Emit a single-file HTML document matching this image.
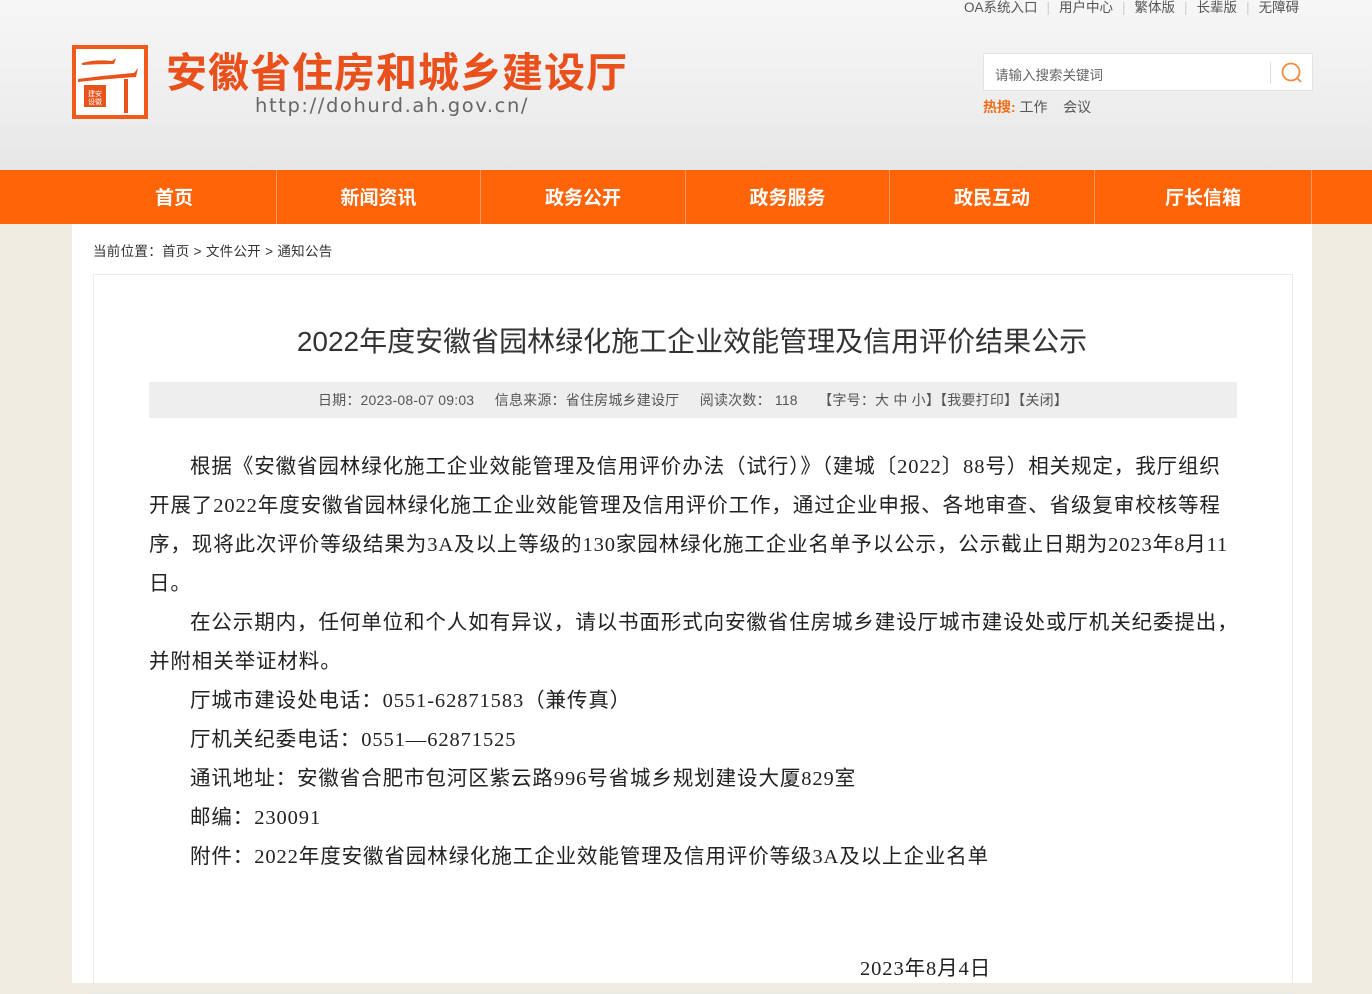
<!DOCTYPE html>
<html><head><meta charset="utf-8"><style>
*{margin:0;padding:0;box-sizing:border-box}
body{width:1372px;height:983px;overflow:hidden;background:#f0ebe1;font-family:"Liberation Sans","Noto Sans CJK SC",sans-serif;position:relative}
.hdr{position:absolute;left:0;top:0;width:1372px;height:170px;background:linear-gradient(#f6f6f6,#eeeeee 60%,#e6e6e6)}
.logo{position:absolute;left:72px;top:45px;width:76px;height:74px;border:4px solid #f05a1a;background:#fff}
.title{position:absolute;left:166px;top:41px;font-size:41px;font-weight:bold;color:#e9501c;letter-spacing:1px;font-family:"Noto Sans CJK SC",sans-serif;line-height:56px}
.url{position:absolute;left:255px;top:94px;font-size:19.5px;color:#666;letter-spacing:1.6px;font-family:"DejaVu Sans",sans-serif}
.top{position:absolute;left:964px;top:0;font-size:13.5px;color:#555;line-height:16px}
.top i{color:#ccc;font-style:normal;margin:0 9px}
.search{position:absolute;left:983px;top:53px;width:330px;height:38px;background:#fff;border:1px solid #e2e2e2}
.search span{position:absolute;left:11px;top:10px;font-size:13.5px;color:#666}
.search b{position:absolute;left:286px;top:8px;width:1px;height:22px;background:#ddd}
.hot{position:absolute;left:983px;top:97px;font-size:14px;color:#555}
.hot em{color:#f36b14;font-style:normal;font-weight:bold}
.nav{position:absolute;left:0;top:170px;width:1372px;height:54px;background:#ff6409}
.nav div{position:absolute;top:0;height:54px;line-height:54px;text-align:center;color:#fff;font-weight:bold;font-size:19px;border-right:1px solid #ff9a5e;font-family:"Noto Sans CJK SC",sans-serif}
.main{position:absolute;left:72px;top:224px;width:1240px;height:759px;background:#fff}
.crumb{position:absolute;left:21px;top:16px;font-size:13.5px;color:#333;letter-spacing:0.3px}
.box{position:absolute;left:21px;top:50px;width:1200px;height:720px;border:1px solid #eaeaea}
h1{position:absolute;left:0;width:1240px;top:96px;text-align:center;font-weight:normal;font-size:28px;color:#333;font-family:"Liberation Sans","Noto Sans CJK SC",sans-serif}
.meta{position:absolute;left:77px;top:158px;width:1088px;height:36px;background:#eeeeee;text-align:center;line-height:36px;font-size:14px;color:#555;letter-spacing:0.2px}
.body{position:absolute;left:77px;top:224px;width:1090px;font-size:20.5px;line-height:39px;color:#222;font-family:"Liberation Serif","Noto Sans CJK SC",serif;letter-spacing:0.9px}
.body p{text-indent:2em}
</style></head><body>
<div class="hdr"></div>
<div class="logo"><svg width="68" height="66" viewBox="0 0 68 66"><path d="M6 14 Q20 10 36 12 L40 9 L38 15 Q22 15 6 16Z" fill="#e8531c"/><path d="M2 30 Q30 26 58 24 L62 19 L60 28 Q30 30 2 33Z" fill="#e8531c"/><rect x="48" y="30" width="4" height="34" fill="#e8531c"/><rect x="8" y="36" width="22" height="22" fill="#e8531c"/><text x="19" y="47" font-size="7" fill="#fff" text-anchor="middle">建安</text><text x="19" y="55" font-size="7" fill="#fff" text-anchor="middle">设徽</text></svg></div>
<div class="title">安徽省住房和城乡建设厅</div>
<div class="url">http://dohurd.ah.gov.cn/</div>
<div class="top">OA系统入口<i>|</i>用户中心<i>|</i>繁体版<i>|</i>长辈版<i>|</i>无障碍</div>
<div class="search"><span>请输入搜索关键词</span><b></b><svg style="position:absolute;left:296px;top:7px" width="24" height="24" viewBox="0 0 24 24"><circle cx="11" cy="11" r="8.5" fill="none" stroke="#f08a3e" stroke-width="1.8"/><path d="M17 17l4 4" stroke="#f08a3e" stroke-width="1.8"/></svg></div>
<div class="hot"><em>热搜:</em> 工作 &nbsp;&nbsp; 会议</div>
<div class="nav">
<div style="left:72px;width:205px">首页</div>
<div style="left:277px;width:204px">新闻资讯</div>
<div style="left:481px;width:205px">政务公开</div>
<div style="left:686px;width:204px">政务服务</div>
<div style="left:890px;width:205px">政民互动</div>
<div style="left:1095px;width:217px">厅长信箱</div>
</div>
<div class="main">
<div class="crumb">当前位置：首页 &gt; 文件公开 &gt; 通知公告</div>
<div class="box"></div>
<h1>2022年度安徽省园林绿化施工企业效能管理及信用评价结果公示</h1>
<div class="meta">日期：2023-08-07 09:03 &nbsp;&nbsp;&nbsp; 信息来源：省住房城乡建设厅 &nbsp;&nbsp;&nbsp; 阅读次数： 118 &nbsp;&nbsp;&nbsp; 【字号：大 中 小】【我要打印】【关闭】</div>
<div class="body">
<p>根据《安徽省园林绿化施工企业效能管理及信用评价办法（试行）》（建城〔2022〕88号）相关规定，我厅组织开展了2022年度安徽省园林绿化施工企业效能管理及信用评价工作，通过企业申报、各地审查、省级复审校核等程序，现将此次评价等级结果为3A及以上等级的130家园林绿化施工企业名单予以公示，公示截止日期为2023年8月11日。</p>
<p>在公示期内，任何单位和个人如有异议，请以书面形式向安徽省住房城乡建设厅城市建设处或厅机关纪委提出，并附相关举证材料。</p>
<p>厅城市建设处电话：0551-62871583（兼传真）</p>
<p>厅机关纪委电话：0551—62871525</p>
<p>通讯地址：安徽省合肥市包河区紫云路996号省城乡规划建设大厦829室</p>
<p>邮编：230091</p>
<p>附件：2022年度安徽省园林绿化施工企业效能管理及信用评价等级3A及以上企业名单</p>
<p>&nbsp;</p>
<p style="padding-left:711px;text-indent:0;margin-top:34px">2023年8月4日</p>
</div>
</div>
</body></html>
